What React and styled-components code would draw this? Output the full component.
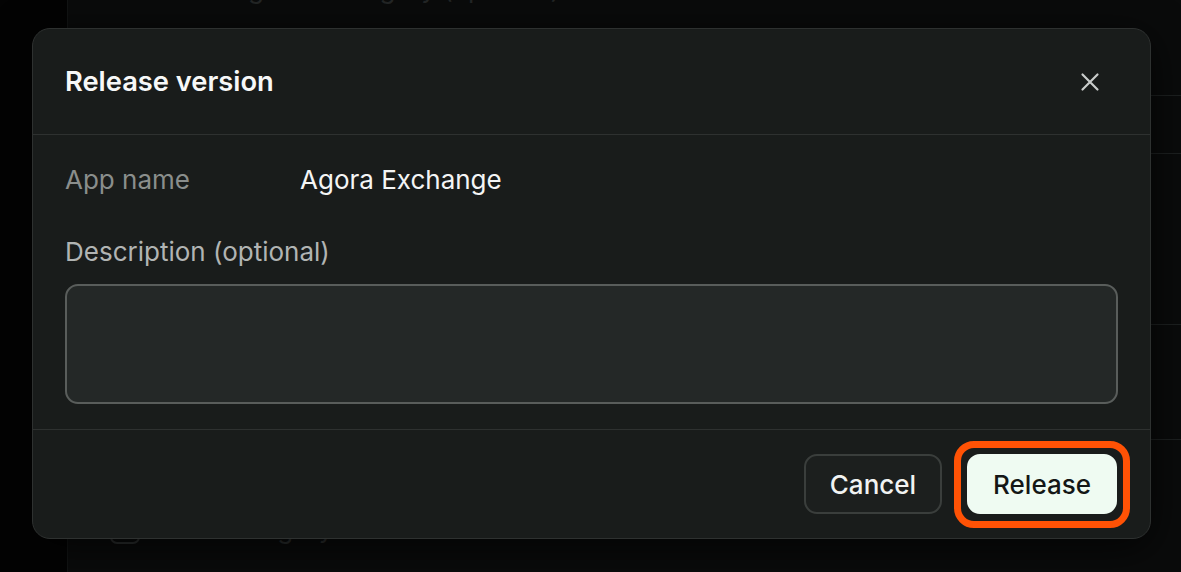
import React from "react";
import styled, { createGlobalStyle } from "styled-components";

const GlobalStyle = createGlobalStyle`
  html, body {
    margin: 0;
    padding: 0;
    background: #0a0b0b;
    font-family: Inter, "Noto Sans", sans-serif;
    -webkit-font-smoothing: antialiased;
  }
  * {
    box-sizing: border-box;
  }
`;

function CloseIcon() {
  return (
    <svg width="24" height="24" viewBox="0 0 24 24" fill="none">
      <path
        d="M4.5 4.5L19.5 19.5M19.5 4.5L4.5 19.5"
        stroke="#c9cccb"
        strokeWidth="2.2"
        strokeLinecap="round"
      />
    </svg>
  );
}

function App() {
  return (
    <>
      <GlobalStyle />
      <Page>
        <Sidebar />
        <Main>
          <Section height={96}>
            <FaintHeading>Settings for category (optional)</FaintHeading>
          </Section>
          <Section height={58} />
          <Section height={171} />
          <Section height={115} />
          <CheckRow>
            <FaintBox />
            <FaintText>Hide category</FaintText>
          </CheckRow>
        </Main>

        <Modal>
          <Header>
            <Title>Release version</Title>
            <CloseButton aria-label="Close">
              <CloseIcon />
            </CloseButton>
          </Header>
          <Body>
            <InfoRow>
              <Label>App name</Label>
              <Value>Agora Exchange</Value>
            </InfoRow>
            <FieldLabel>Description (optional)</FieldLabel>
            <TextArea />
          </Body>
          <Footer>
            <Button>Cancel</Button>
            <Button primary highlighted>
              Release
            </Button>
          </Footer>
        </Modal>
      </Page>
    </>
  );
}

export default App;

const Page = styled.div`
  position: relative;
  width: 100vw;
  height: 100vh;
  display: flex;
  overflow: hidden;
  background: #0a0b0b;
`;

const Sidebar = styled.div`
  width: 68px;
  flex-shrink: 0;
  background: #030303;
  border-right: 1px solid #121414;
`;

const Main = styled.div`
  flex: 1;
  display: flex;
  flex-direction: column;
`;

const Section = styled.div`
  height: ${(props) => props.height}px;
  flex-shrink: 0;
  border-bottom: 1px solid #1d2020;
`;

const FaintHeading = styled.div`
  margin-top: -26px;
  padding-left: 110px;
  font-size: 26px;
  line-height: 30px;
  color: #232626;
`;

const CheckRow = styled.div`
  display: flex;
  align-items: center;
  gap: 20px;
  padding: 73px 0 0 42px;
`;

const FaintBox = styled.div`
  width: 30px;
  height: 30px;
  border: 2px solid #2c2f2f;
  border-radius: 7px;
`;

const FaintText = styled.div`
  font-size: 26px;
  color: #2b2e2e;
`;

const Modal = styled.div`
  position: absolute;
  left: 32px;
  top: 28px;
  width: 1119px;
  display: flex;
  flex-direction: column;
  background: #191c1b;
  border: 1px solid #2e3130;
  border-radius: 18px;
  box-shadow: 0 8px 40px rgba(0, 0, 0, 0.7);
`;

const Header = styled.div`
  height: 106px;
  display: flex;
  align-items: center;
  justify-content: space-between;
  padding: 0 44px 0 32px;
  border-bottom: 1px solid #2e3130;
`;

const Title = styled.h2`
  margin: 0;
  font-size: 27.3px;
  font-weight: 600;
  line-height: 34px;
  color: #f7f8f8;
`;

const CloseButton = styled.button`
  display: flex;
  align-items: center;
  justify-content: center;
  width: 32px;
  height: 32px;
  padding: 0;
  border: none;
  background: transparent;
  cursor: pointer;
`;

const Body = styled.div`
  display: flex;
  flex-direction: column;
  padding: 29px 32px 25px 32px;
  border-bottom: 1px solid #2e3130;
`;

const InfoRow = styled.div`
  display: grid;
  grid-template-columns: 235px 1fr;
  align-items: center;
  line-height: 32px;
  font-size: 26px;
`;

const Label = styled.div`
  color: #8a8e8c;
`;

const Value = styled.div`
  color: #f4f5f5;
`;

const FieldLabel = styled.div`
  margin-top: 40px;
  font-size: 26px;
  line-height: 32px;
  color: #b1b4b3;
`;

const TextArea = styled.textarea`
  margin-top: 16px;
  height: 120px;
  width: 100%;
  resize: none;
  background: #242827;
  border: 2px solid #595d5b;
  border-radius: 13px;
  outline: none;
  font-family: inherit;
  font-size: 26px;
  color: #f4f5f5;
`;

const Footer = styled.div`
  display: flex;
  justify-content: flex-end;
  gap: 25px;
  padding: 24px 33px 24px 32px;
`;

const Button = styled.button`
  position: relative;
  height: 60px;
  padding: 0 24px;
  font-family: inherit;
  font-size: 26px;
  font-weight: 500;
  border-radius: 13px;
  cursor: pointer;
  color: ${(props) => (props.primary ? "#141716" : "#f1f3f2")};
  background: ${(props) => (props.primary ? "#effbf2" : "#1c1f1e")};
  border: 2px solid ${(props) => (props.primary ? "#effbf2" : "#3a3e3c")};

  &::after {
    content: "";
    display: ${(props) => (props.highlighted ? "block" : "none")};
    position: absolute;
    inset: -15px -15px -16px -15px;
    border: 7px solid #ff5205;
    border-radius: 20px;
    pointer-events: none;
  }
`;
